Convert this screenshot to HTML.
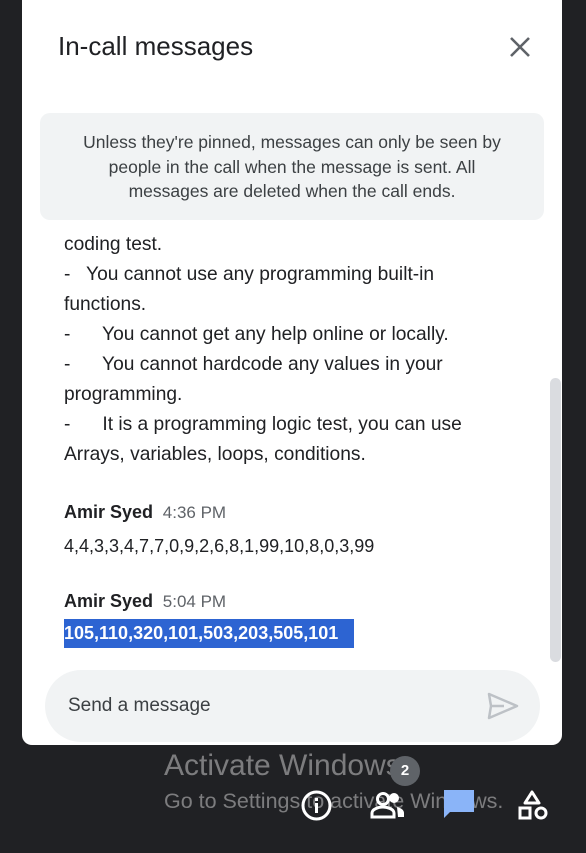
<!DOCTYPE html>
<html><head><style>
*{margin:0;padding:0;box-sizing:border-box}
body{width:586px;height:853px;background:#202124;position:relative;overflow:hidden;font-family:"Liberation Sans",Arial,sans-serif}
.panel{position:absolute;left:22px;top:0;width:540px;height:745px;background:#fff;border-radius:0 0 10px 10px;overflow:hidden}
.abs{position:absolute;white-space:nowrap}
.t{position:absolute;left:64px;font-size:19.2px;color:#202124;white-space:pre;line-height:30px}
</style></head><body>
<div class="panel"></div>
<div class="abs" style="left:58px;top:31px;font-size:26px;color:#202124">In-call messages</div>
<svg class="abs" style="left:508px;top:35px" width="24" height="24" viewBox="0 0 24 24"><path d="M3 3L21 21M21 3L3 21" stroke="#5f6368" stroke-width="2.6"/></svg>
<div class="abs" style="left:40px;top:113px;width:504px;height:107px;background:#f1f3f4;border-radius:10px"></div>
<div class="abs" style="left:40px;top:130px;width:504px;text-align:center;font-size:17.5px;line-height:24.5px;color:#3c4043;white-space:normal">Unless they're pinned, messages can only be seen by<br>people in the call when the message is sent. All<br>messages are deleted when the call ends.</div>
<div class="t" style="top:230px">coding test.</div>
<div class="t" style="top:260px">-   You cannot use any programming built-in</div>
<div class="t" style="top:290px">functions.</div>
<div class="t" style="top:320px">-      You cannot get any help online or locally.</div>
<div class="t" style="top:350px">-      You cannot hardcode any values in your</div>
<div class="t" style="top:380px">programming.</div>
<div class="t" style="top:410px">-      It is a programming logic test, you can use</div>
<div class="t" style="top:440px">Arrays, variables, loops, conditions.</div>
<div class="t" style="top:497px;font-weight:bold;font-size:18px">Amir Syed <span style="font-weight:normal;color:#5f6368;font-size:17px"> 4:36 PM</span></div>
<div class="t" style="top:531px;font-size:18px">4,4,3,3,4,7,7,0,9,2,6,8,1,99,10,8,0,3,99</div>
<div class="t" style="top:586px;font-weight:bold;font-size:18px">Amir Syed <span style="font-weight:normal;color:#5f6368;font-size:17px"> 5:04 PM</span></div>
<div class="abs" style="left:64px;top:619px;width:290px;height:29px;background:#2d64d2"></div>
<div class="t" style="top:619px;color:#fff;line-height:29px;font-size:18px;font-weight:bold">105,110,320,101,503,203,505,101</div>
<div class="abs" style="left:550px;top:378px;width:11px;height:284px;background:#dadce0;border-radius:6px"></div>
<div class="abs" style="left:45px;top:670px;width:495px;height:72px;background:#f1f3f4;border-radius:36px"></div>
<div class="abs" style="left:68px;top:695px;font-size:19px;color:#3c4043">Send a message</div>
<svg class="abs" style="left:486px;top:691px" width="34" height="30" viewBox="0 0 34 30"><path d="M3 3L31 15L3 27L5 15Z M5 15H18" fill="none" stroke="#bdc1c6" stroke-width="2.5" stroke-linejoin="round"/></svg>
<div class="abs" style="left:164px;top:749px;font-size:30px;color:rgba(200,200,200,.55)">Activate Windows</div>
<div class="abs" style="left:164px;top:789px;font-size:21.5px;color:rgba(200,200,200,.55)">Go to Settings to activate Windows.</div>
<div class="abs" style="left:390px;top:756px;width:30px;height:30px;border-radius:50%;background:#5f6368;color:#fff;font-weight:bold;font-size:15px;text-align:center;line-height:30px">2</div>
<svg class="abs" style="left:300px;top:789px" width="33" height="33" viewBox="0 0 33 33"><circle cx="16.5" cy="16.5" r="13.5" fill="none" stroke="#fff" stroke-width="3"/><rect x="15" y="14" width="3" height="10" fill="#fff"/><rect x="15" y="9" width="3" height="3" fill="#fff"/></svg>
<svg class="abs" style="left:370px;top:791px" width="36" height="28" viewBox="0 0 36 28"><circle cx="13" cy="8" r="5.5" fill="none" stroke="#fff" stroke-width="3"/><circle cx="24" cy="7" r="5" fill="#fff"/><path d="M2 26v-4c0-4 7-6 11-6s11 2 11 6v4z" fill="none" stroke="#fff" stroke-width="3"/><path d="M27 16c4 1 7 3 7 6v4h-6" fill="#fff"/></svg>
<svg class="abs" style="left:444px;top:790px" width="32" height="32" viewBox="0 0 32 32"><path d="M0 0h30v22H6l-6 6z" fill="#8ab4f8"/></svg>
<svg class="abs" style="left:516px;top:789px" width="34" height="33" viewBox="0 0 34 33"><path d="M16 3L23 14H9Z" fill="none" stroke="#fff" stroke-width="3" stroke-linejoin="round"/><rect x="4" y="19" width="10" height="10" fill="none" stroke="#fff" stroke-width="3"/><circle cx="25" cy="24" r="5" fill="none" stroke="#fff" stroke-width="3"/></svg>
</body></html>
